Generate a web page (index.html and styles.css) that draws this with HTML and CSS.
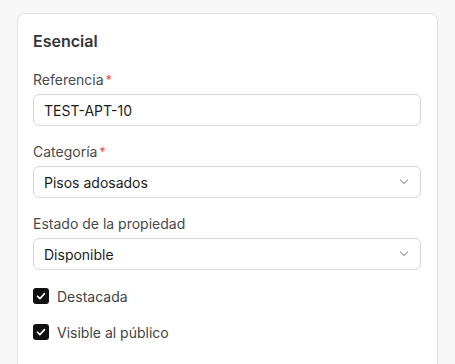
FILE: index.html
```html
<!DOCTYPE html>
<html lang="es">
    <head>
        <meta charset="utf-8">
        <title>Esencial</title>
        <link rel="stylesheet" href="styles.css">
    </head>
    <body>
        <div class="card">
            <div class="card-title">Esencial</div>

            <div class="field">
                <label class="label">Referencia<span class="req">*</span></label>
                <div class="input">TEST-APT-10</div>
            </div>

            <div class="field">
                <label class="label">Categoría<span class="req">*</span></label>
                <div class="input select">
                    <span>Pisos adosados</span>
                    <svg class="chevron" width="10" height="6" viewBox="0 0 10 6"><path d="M1.5 1.2l3.5 3.5 3.5-3.5" fill="none" stroke="#9a9a9a" stroke-width="1.1" stroke-linecap="round" stroke-linejoin="round"/></svg>
                </div>
            </div>

            <div class="field">
                <label class="label">Estado de la propiedad</label>
                <div class="input select">
                    <span>Disponible</span>
                    <svg class="chevron" width="10" height="6" viewBox="0 0 10 6"><path d="M1.5 1.2l3.5 3.5 3.5-3.5" fill="none" stroke="#9a9a9a" stroke-width="1.1" stroke-linecap="round" stroke-linejoin="round"/></svg>
                </div>
            </div>

            <div class="check">
                <span class="box"><svg width="12" height="12" viewBox="0 0 12 12"><path d="M2.5 6.2l2.4 2.4 4.6-5" fill="none" stroke="#fff" stroke-width="1.6" stroke-linecap="round" stroke-linejoin="round"/></svg></span>
                <span>Destacada</span>
            </div>
            <div class="check">
                <span class="box"><svg width="12" height="12" viewBox="0 0 12 12"><path d="M2.5 6.2l2.4 2.4 4.6-5" fill="none" stroke="#fff" stroke-width="1.6" stroke-linecap="round" stroke-linejoin="round"/></svg></span>
                <span>Visible al público</span>
            </div>
        </div>
    </body>
</html>
```

FILE: styles.css
```css
body{
    margin: 0;
    padding: 13px 17px 0 17px;
    background: #f7f7f7;
    font-family: Inter, "Noto Sans", sans-serif;
    color: #333333;
}
.card{
    background: #ffffff;
    border: 1px solid #e3e3e3;
    border-bottom: none;
    border-radius: 8px 8px 0 0;
    padding: 15px 16px 0 15px;
    height: 351px;
    box-sizing: border-box;
}
.card-title{
    font-size: 16px;
    line-height: 24px;
    font-weight: 600;
    color: #353535;
    margin-bottom: 17px;
}
.field{
    display: flex;
    flex-direction: column;
    gap: 4px;
    margin-bottom: 16px;
}
.label{
    font-size: 14px;
    line-height: 20px;
    color: #4a4a4a;
}
.req{
    color: #e5484d;
    margin-left: 2px;
    font-size: 12px;
    vertical-align: top;
}
.input{
    height: 32px;
    box-sizing: border-box;
    border: 1px solid #d6d6d6;
    border-radius: 6px;
    padding: 0 10px;
    display: flex;
    align-items: center;
    font-size: 14px;
    color: #1c1c1c;
}
.select{
    justify-content: space-between;
    padding-right: 11px;
}
.chevron{
    display: block;
}
.check{
    display: flex;
    align-items: center;
    gap: 8px;
    height: 20px;
    font-size: 14px;
    color: #444444;
    margin-bottom: 16px;
}
.check:last-child{
    margin-bottom: 0;
}
.box{
    width: 16px;
    height: 16px;
    border-radius: 3px;
    background: #111111;
    display: flex;
    align-items: center;
    justify-content: center;
}
```
